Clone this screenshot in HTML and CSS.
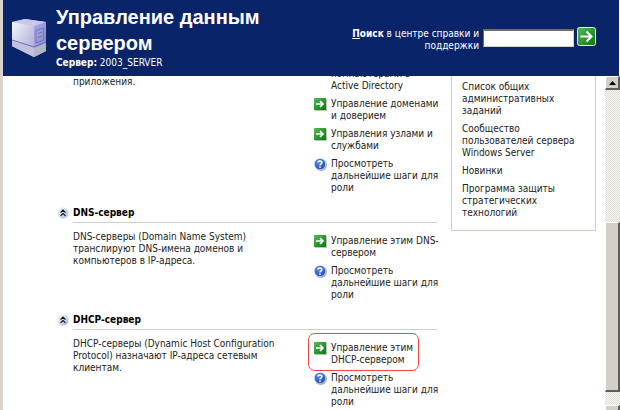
FILE: index.html
```html
<!DOCTYPE html>
<html lang="ru">
<head>
<meta charset="utf-8">
<title>Управление данным сервером</title>
<link rel="stylesheet" href="styles.css">
</head>
<body>
<svg class="defs" aria-hidden="true">
  <defs>
    <linearGradient id="green" x1="0" y1="0" x2="1" y2="1"><stop offset="0" stop-color="#5cb85c"/><stop offset=".5" stop-color="#2c9a30"/><stop offset="1" stop-color="#08780c"/></linearGradient>
    <radialGradient id="blue" cx=".4" cy=".3" r=".7"><stop offset="0" stop-color="#5f92ea"/><stop offset="1" stop-color="#1d47b4"/></radialGradient>
    <linearGradient id="pearl" x1="0" y1="0" x2="1" y2="1"><stop offset="0" stop-color="#fbfcff"/><stop offset="1" stop-color="#a9b8dc"/></linearGradient>
    <linearGradient id="case" x1="0" y1="0" x2="1" y2="1"><stop offset="0" stop-color="#f4f4fc"/><stop offset="1" stop-color="#a5a3d2"/></linearGradient>
    <linearGradient id="front" x1="0" y1="0" x2="1" y2="1"><stop offset="0" stop-color="#aaa9e4"/><stop offset="1" stop-color="#8583ca"/></linearGradient>
    <symbol id="go" viewBox="0 0 13 13">
      <path d="M12 1h1v12H1v-1h11z" fill="#b9c4b9"/>
      <rect width="12" height="12" fill="url(#green)"/>
      <path d="M2 6h7M6 3l3 3-3 3" fill="none" stroke="#fff" stroke-width="1.7"/>
    </symbol>
    <symbol id="help" viewBox="0 0 13 13">
      <circle cx="7" cy="7" r="6" fill="#aab0b8"/>
      <circle cx="6" cy="6" r="5.6" fill="url(#blue)" stroke="#dce6f8" stroke-width=".6"/>
      <path d="M4 4.600C4 2.400 8 2.400 8 4.500 8 6 6 5.800 6 7.500M6 8.600v1.300" fill="none" stroke="#fff" stroke-width="1.4"/>
    </symbol>
    <symbol id="collapse" viewBox="0 0 12 12">
      <circle cx="6" cy="6" r="5.700" fill="url(#pearl)"/>
      <path d="M3.500 5.600 6 3.200l2.500 2.400M3.500 8.900 6 6.500l2.500 2.400" fill="none" stroke="#111" stroke-width="1.200"/>
    </symbol>
  </defs>
</svg>

<header class="banner">
  <svg class="server" viewBox="0 0 34 38" aria-hidden="true">
    <path d="M0 3 13 0 34 3v29l-12 6L0 27z" fill="#b5b4df"/>
    <path d="M0 3 13 0 34 3 22 7z" fill="#c9c9ee"/>
    <path d="M0 3 22 7v31L0 27z" fill="url(#case)"/>
    <path d="M22 7 34 3v29l-12 6z" fill="url(#front)"/>
    <path d="M0 21 22 28 34 23" fill="none" stroke="#6c6ab4"/>
    <path d="M0 22 22 29v9L0 27z" fill="#c3c2da"/>
    <path d="M22 29 34 24v8l-12 6z" fill="#b5b5ca"/>
    <path d="m24 11.500 7.500-2.500v12l-7.500 3zM26 14.500l4-1.500M26 18.500l4-1.500" fill="none" stroke="#6a69b4" stroke-width=".8"/>
    <path d="M30 28h2v2h-2z" fill="#62e958"/>
  </svg>
  <div class="title">
    <h1>Управление данным сервером</h1>
    <p><b>Сервер:</b> 2003_SERVER</p>
  </div>
  <form class="search">
    <label for="query"><b><u>П</u>оиск</b> в центре справки и поддержки</label>
    <input id="query" type="text">
    <button type="button" aria-label="Найти">
      <svg viewBox="0 0 19 19"><rect x=".5" y=".5" width="18" height="18" rx="2" fill="url(#green)" stroke="#e4f0dc"/><path d="M3.500 9.500h11M9.500 4.500l5 5-5 5" fill="none" stroke="#fff" stroke-width="2"/></svg>
    </button>
  </form>
</header>

<div class="view">
  <main class="page">
    <div class="roles">
      <section class="role">
        <div class="detail">
          <p class="tail">приложения.</p>
          <ul class="links">
            <li><span class="icon"></span><a href="#">компьютерами в Active&nbsp;Directory</a></li>
            <li><svg class="icon"><use href="#go"/></svg><a href="#">Управление доменами и доверием</a></li>
            <li><svg class="icon"><use href="#go"/></svg><a href="#">Управления узлами и службами</a></li>
            <li><svg class="icon"><use href="#help"/></svg><a href="#">Просмотреть дальнейшие шаги для роли</a></li>
          </ul>
        </div>
      </section>
      <section class="role">
        <h2><button type="button" aria-label="Свернуть"><svg><use href="#collapse"/></svg></button>DNS-сервер</h2>
        <div class="detail ruled">
          <p>DNS-серверы (Domain Name System) транслируют DNS-имена доменов и компьютеров в IP-адреса.</p>
          <ul class="links">
            <li><svg class="icon"><use href="#go"/></svg><a href="#">Управление этим DNS-сервером</a></li>
            <li><svg class="icon"><use href="#help"/></svg><a href="#">Просмотреть дальнейшие шаги для роли</a></li>
          </ul>
        </div>
      </section>
      <section class="role">
        <h2><button type="button" aria-label="Свернуть"><svg><use href="#collapse"/></svg></button>DHCP-сервер</h2>
        <div class="detail ruled">
          <p>DHCP-серверы (Dynamic Host Configuration Protocol) назначают IP-адреса сетевым клиентам.</p>
          <ul class="links">
            <li class="marked"><svg class="icon"><use href="#go"/></svg><a href="#">Управление этим DHCP-сервером</a></li>
            <li><svg class="icon"><use href="#help"/></svg><a href="#">Просмотреть дальнейшие шаги для роли</a></li>
          </ul>
        </div>
      </section>
    </div>
    <aside class="also">
      <a href="#">Список общих административных заданий</a>
      <a href="#">Сообщество пользователей сервера Windows Server</a>
      <a href="#">Новинки</a>
      <a href="#">Программа защиты стратегических технологий</a>
    </aside>
  </main>
  <div class="scrollbar" aria-hidden="true">
    <div class="knob"><svg viewBox="0 0 7 4"><path d="M0 4 3.500 0 7 4z"/></svg></div>
    <div class="track"></div>
    <div class="knob thumb"></div>
    <div class="gap"></div>
    <div class="knob"></div>
  </div>
</div>
</body>
</html>
```
FILE: styles.css
```css
* { box-sizing: border-box; }

body {
  margin: 0;
  height: 100vh;
  overflow: hidden;
  display: flex;
  flex-direction: column;
  border-left: 3px solid #d8d4cc;
  background: #fff;
  color: #222;
  font: 10px/12px "DejaVu Sans Condensed", "DejaVu Sans", sans-serif;
}

h1, h2, p, ul { margin: 0; padding: 0; }
a { color: inherit; text-decoration: none; }
button { border: 0; padding: 0; background: none; display: block; }
button svg { display: block; width: 100%; height: 100%; }
.defs { position: absolute; width: 0; height: 0; }

.banner {
  flex: none;
  display: flex;
  align-items: center;
  height: 76px;
  margin-right: 1px;
  padding: 0 23px 0 9px;
  background: #0a246a;
  color: #fff;
}
.server { flex: none; width: 34px; height: 38px; }
.title { width: 230px; margin-left: 10px; padding-bottom: 4px; }
.title h1 { font: bold 20px/26px "Liberation Sans", sans-serif; }
.title p { margin-top: 1px; }
.search { flex: 1; display: flex; align-items: center; justify-content: flex-end; }
.search label { width: 130px; padding-top: 3px; text-align: right; }
.search input {
  width: 91px;
  height: 18px;
  margin: 0 3px 0 4px;
  border: 1px solid #d4d0c8;
  border-top: 2px solid #716f64;
  border-left-color: #716f64;
  background: #fff;
}
.search button { width: 19px; height: 19px; margin-bottom: 3px; }

.view { flex: 1; min-height: 0; display: flex; overflow: hidden; }
.page {
  flex: 1;
  display: grid;
  grid-template-columns: 1fr 145px;
  column-gap: 14px;
  align-items: start;
  margin-top: -8px;
  padding: 0 9px 0 54px;
}

.role { margin-bottom: 9px; }
.role h2 {
  display: flex;
  align-items: center;
  gap: 4px;
  height: 19px;
  font-size: 10px;
  line-height: 12px;
  color: #000;
}
.role h2 button { width: 12px; height: 12px; }
.detail {
  display: grid;
  grid-template-columns: 1fr 123px;
  column-gap: 36px;
  margin-left: 16px;
}
.ruled { border-top: 1px solid #d0cec8; padding-top: 8px; }
.tail { padding-top: 8px; }
.ruled .links { padding-top: 4px; }
.links { display: flex; flex-direction: column; gap: 6px; margin-right: -7px; list-style: none; }
.links li { display: flex; align-items: flex-start; gap: 4px; }
.icon { flex: none; width: 13px; height: 13px; }
.marked { position: relative; }
.marked::after {
  content: "";
  position: absolute;
  inset: -9px 25px -5px -6px;
  border: 1px solid #f04848;
  border-radius: 7px;
}

.also {
  display: flex;
  flex-direction: column;
  gap: 6px;
  padding: 13px 10px 11px;
  border: 1px solid #d0cec4;
  border-top: 0;
}

.scrollbar { flex: none; display: flex; flex-direction: column; width: 15px; }
.knob {
  flex: none;
  display: grid;
  place-items: center;
  height: 14px;
  border: 1px solid #fff;
  border-right: 2px solid #605e5a;
  border-bottom: 2px solid #605e5a;
  background: #d4d0c8;
}
.knob svg { width: 7px; height: 4px; }
.thumb { height: 170px; }
.track, .gap { background: repeating-conic-gradient(#e0ddd6 0 25%, #f8f7f4 0 50%) 0 0 / 2px 2px; }
.track { flex: 1; }
.gap { flex: none; height: 13px; }
.gap + .knob { height: 5px; border-bottom: 0; }
```
